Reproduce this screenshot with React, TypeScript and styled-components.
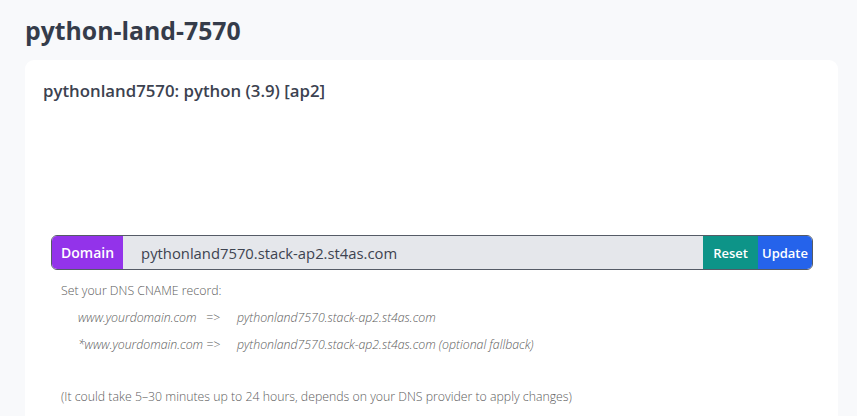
import React from "react";
import styled, { createGlobalStyle } from "styled-components";

const Global = createGlobalStyle`
  html, body { margin: 0; padding: 0; background: #f8f9fb; }
  body { font-family: "Open Sans", "Noto Sans", sans-serif; }
`;

const Page = styled.div`
  padding: 14px 19px 0 25px;
`;

const Title = styled.h1`
  margin: 0 0 13px 0;
  font-size: 24.8px;
  line-height: 33px;
  font-weight: 700;
  color: #353c4a;
`;

const Card = styled.div`
  background: #ffffff;
  border-radius: 9px 9px 0 0;
  padding: 18px 25px 0 18px;
  height: 340px;
`;

const Sub = styled.h2`
  margin: 0;
  font-size: 16.8px;
  line-height: 26px;
  font-weight: 600;
  color: #3c4250;
`;

const Bar = styled.div`
  display: flex;
  height: 33px;
  margin: 131px 0 0 8px;
  border: 1px solid #555b66;
  border-radius: 6px;
  overflow: hidden;
`;

const Label = styled.div`
  display: flex;
  align-items: center;
  padding: 0 9px;
  background: #9333ea;
  color: #fff;
  font-size: 14px;
  font-weight: 600;
`;

const Input = styled.div`
  flex: 1;
  display: flex;
  align-items: center;
  padding-left: 18px;
  background: #e5e7eb;
  color: #3d4350;
  font-size: 14.8px;
  font-weight: 500;
`;

const Btn = styled.button<{ $bg: string; $pad: number }>`
  border: 0;
  background: ${(p) => p.$bg};
  color: #fff;
  font-family: inherit;
  font-size: 13px;
  font-weight: 600;
  padding: 0 ${(p) => p.$pad}px;
  cursor: pointer;
`;

const Help = styled.div`
  padding: 8px 0 0 18px;
  color: #5c5c5c;
  font-size: 12.3px;
  font-weight: 300;
`;

const Line = styled.div`
  line-height: 26px;
`;

const Records = styled.div`
  display: grid;
  grid-template-columns: 159px auto;
  padding-left: 17px;
  font-style: italic;
  line-height: 27px;
  margin-bottom: 26px;
`;

export default function App() {
  return (
    <>
      <Global />
      <Page>
        <Title>python-land-7570</Title>
        <Card>
          <Sub>pythonland7570: python (3.9) [ap2]</Sub>
          <Bar>
            <Label>Domain</Label>
            <Input>pythonland7570.stack-ap2.st4as.com</Input>
            <Btn $bg="#0d9488" $pad={10}>Reset</Btn>
            <Btn $bg="#2563eb" $pad={4}>Update</Btn>
          </Bar>
          <Help>
            <Line>Set your DNS CNAME record:</Line>
            <Records>
              <span>www.yourdomain.com&nbsp;&nbsp;&nbsp;=&gt;</span>
              <span>pythonland7570.stack-ap2.st4as.com</span>
              <span>*www.yourdomain.com =&gt;</span>
              <span>pythonland7570.stack-ap2.st4as.com (optional fallback)</span>
            </Records>
            <Line>(It could take 5–30 minutes up to 24 hours, depends on your DNS provider to apply changes)</Line>
          </Help>
        </Card>
      </Page>
    </>
  );
}
